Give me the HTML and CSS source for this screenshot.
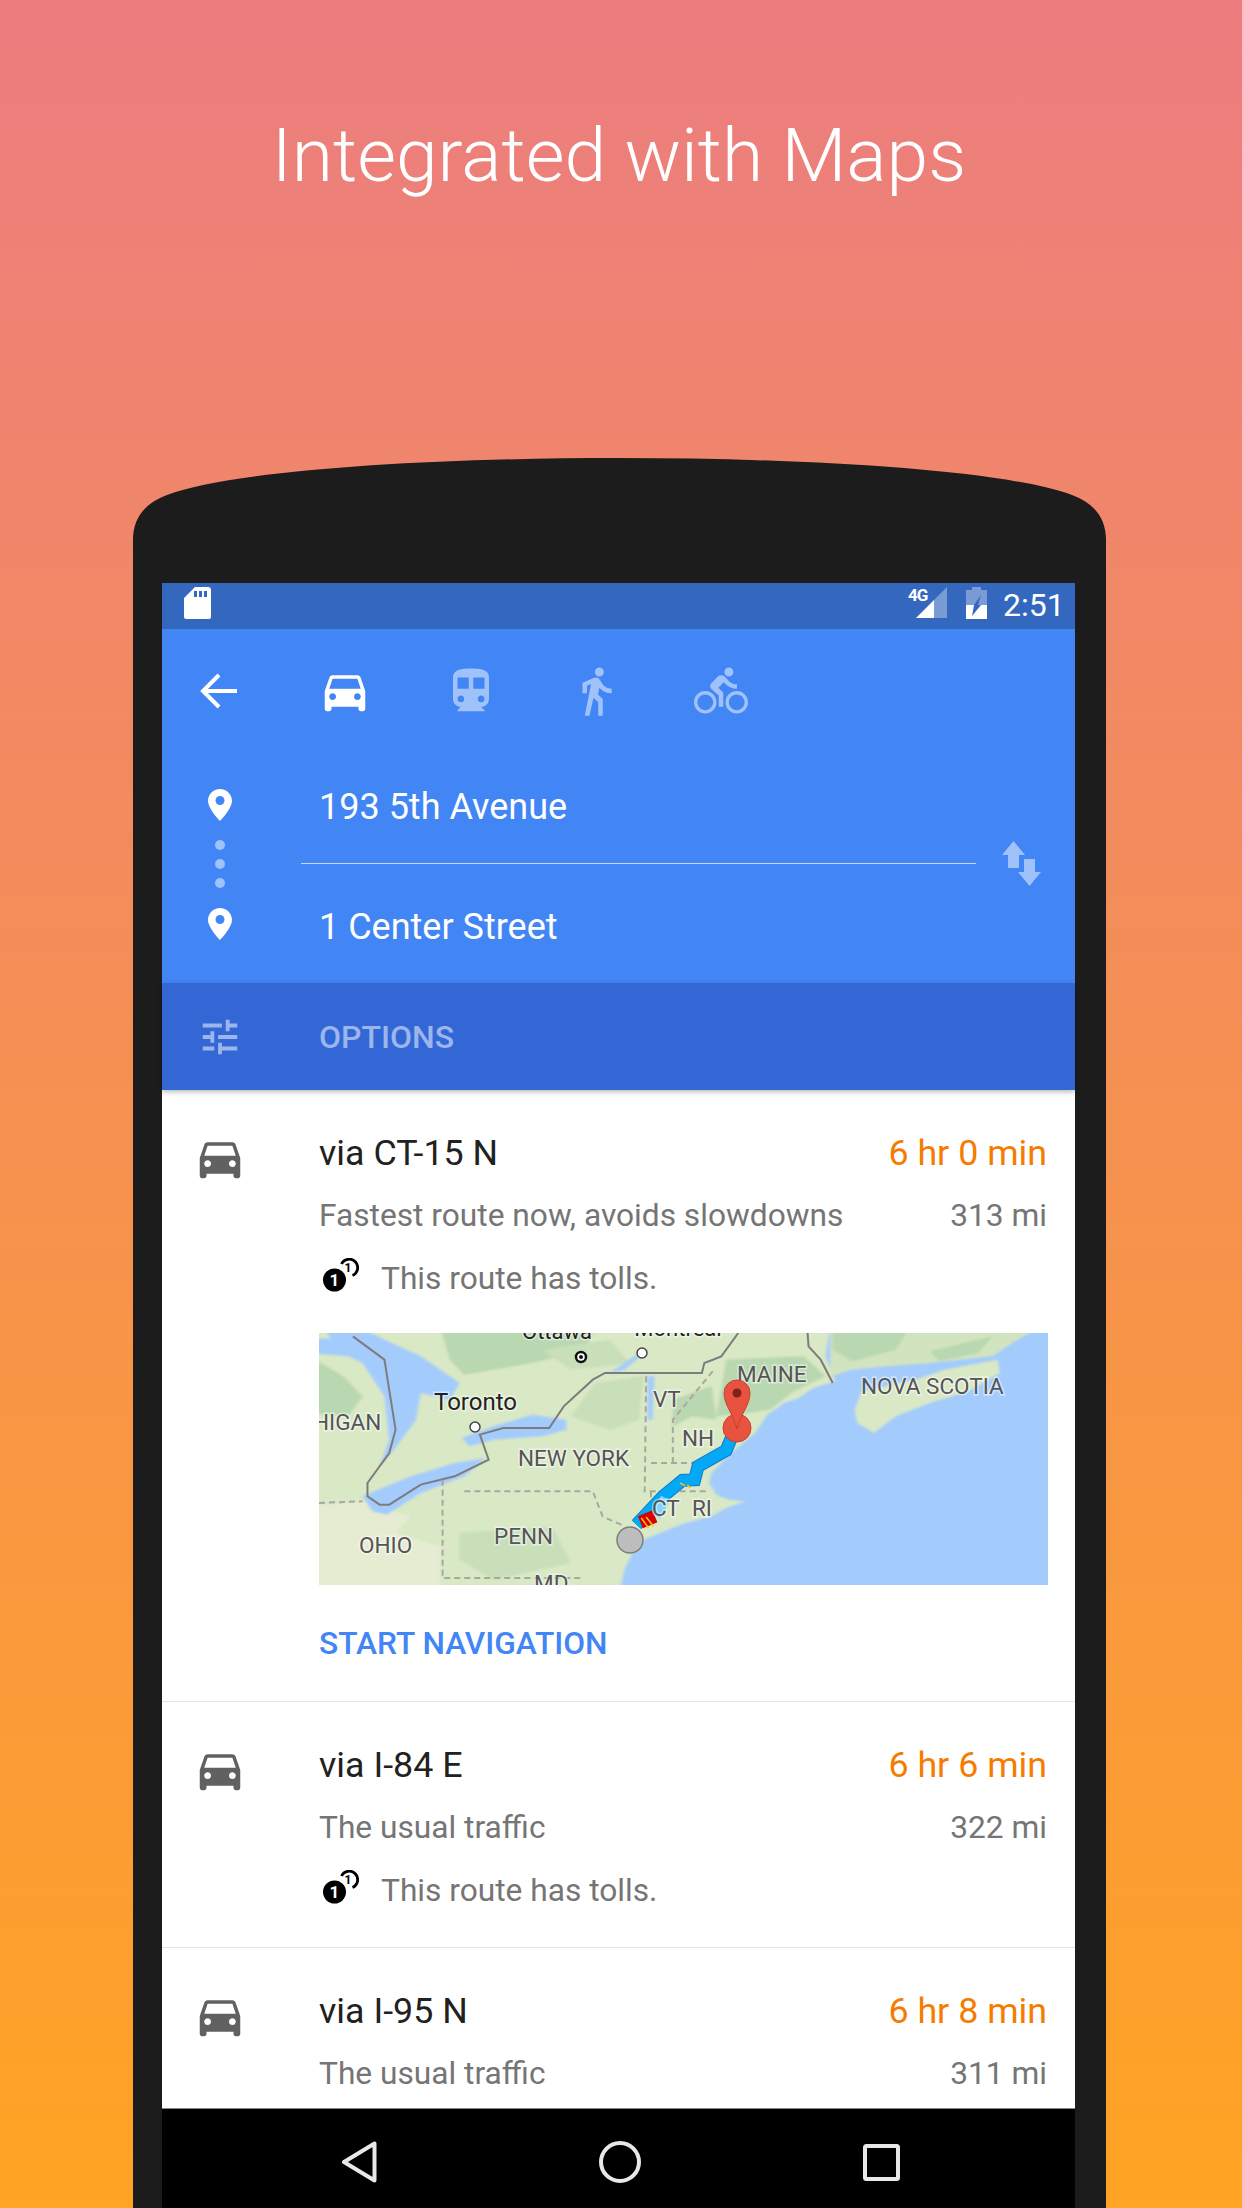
FILE: index.html
```html
<!DOCTYPE html>
<html>
<head lang="en">
    <meta charset="UTF-8">
    <title>Integrated with Maps</title>
    <link rel="stylesheet" href="styles.css">
</head>
<body>
<svg class="defs" width="0" height="0">
    <symbol id="car" viewBox="0 0 24 24"><path d="M18.92 6.01C18.72 5.42 18.16 5 17.5 5h-11c-.66 0-1.21.42-1.42 1.01L3 12v8c0 .55.45 1 1 1h1c.55 0 1-.45 1-1v-1h12v1c0 .55.45 1 1 1h1c.55 0 1-.45 1-1v-8l-2.08-5.99zM6.5 16c-.83 0-1.5-.67-1.5-1.5S5.67 13 6.5 13s1.5.67 1.5 1.5S7.33 16 6.5 16zm11 0c-.83 0-1.5-.67-1.5-1.5s.67-1.5 1.5-1.5 1.5.67 1.5 1.5-.67 1.5-1.5 1.5zM5 11l1.5-4.5h11L19 11H5z"/></symbol>
    <symbol id="pin" viewBox="0 0 24 32"><path fill-rule="evenodd" d="M12 0C5.4 0 0 5.2 0 11.8 0 20 12 32 12 32s12-12 12-20.200C24 5.200 18.600 0 12 0zm0 16a4.500 4.500 0 1 1 0-9 4.500 4.500 0 0 1 0 9z"/></symbol>
    <symbol id="toll" viewBox="0 0 36 34">
        <circle cx="11.500" cy="22" r="11.500" fill="#000"/>
        <path d="M18.500 6a8.500 8.500 0 1 1 11 11.500" fill="none" stroke="#000" stroke-width="2.800"/>
        <text x="11.500" y="28" class="toll-big">1</text>
        <text x="25" y="14" class="toll-small">1</text>
    </symbol>
</svg>

<div class="page">
    <h1 class="headline">Integrated with Maps</h1>

    <div class="phone">
        <div class="screen">
            <div class="statusbar">
                <svg class="sd" viewBox="0 0 27 32"><path fill-rule="evenodd" d="M11 0h13a3 3 0 0 1 3 3v27a2 2 0 0 1-2 2H2a2 2 0 0 1-2-2V11zM10 4v6h3V4zm5 0v6h3V4zm5 0v6h3V4z"/></svg>
                <div class="status-right">
                    <div class="signal">
                        <svg class="signal-icon" viewBox="0 0 31 31"><path d="M31 0v31h-13V13z" opacity=".35"/><path d="M18 13v18H0z"/></svg>
                        <span class="net">4G</span>
                    </div>
                    <svg class="battery" viewBox="0 0 21 32"><path d="M6 0h9v3h6v15H12l3-10-7 10H0V3h6z" opacity=".35"/><path d="M0 18h8l-2 11 9-11h6v14H0z"/></svg>
                    <span class="clock">2:51</span>
                </div>
            </div>

            <div class="header">
                <div class="modes">
                    <svg class="mode" viewBox="0 0 54 54"><path d="M44 33H12M26 17L10 33l16 16" transform="translate(0 -6)" fill="none" stroke="#fff" stroke-width="4"/></svg>
                    <svg class="mode"><use href="#car"/></svg>
                    <svg class="mode dim" viewBox="0 0 24 24"><path d="M12 2c-4.420 0-8 .5-8 4v9.500C4 17.430 5.570 19 7.500 19L6 20.500v.5h12v-.5L16.500 19c1.930 0 3.500-1.570 3.500-3.500V6c0-3.500-3.580-4-8-4zM7.500 17c-.83 0-1.500-.67-1.500-1.500S6.670 14 7.500 14s1.500.67 1.500 1.500S8.330 17 7.500 17zm3.500-6H6V6h5v5zm5.500 6c-.83 0-1.500-.67-1.500-1.500s.67-1.500 1.500-1.500 1.500.67 1.500 1.500-.67 1.500-1.500 1.500zm1.500-6h-5V6h5v5z"/></svg>
                    <svg class="mode dim" viewBox="0 0 24 24"><path d="M13.500 5.500c1.100 0 2-.9 2-2s-.9-2-2-2-2 .9-2 2 .9 2 2 2zM9.800 8.900L7 23h2.100l1.800-8 2.100 2v6h2v-7.500l-2.100-2 .6-3C14.800 12 16.800 13 19 13v-2c-1.900 0-3.500-1-4.300-2.400l-1-1.600c-.4-.6-1-1-1.700-1-.3 0-.5.1-.8.1L6 8.300V13h2V9.600l1.800-.7"/></svg>
                    <svg class="mode dim" viewBox="0 0 24 24"><path d="M15.500 5.500c1.100 0 2-.9 2-2s-.9-2-2-2-2 .9-2 2 .9 2 2 2zM5 12c-2.800 0-5 2.200-5 5s2.200 5 5 5 5-2.200 5-5-2.200-5-5-5zm0 8.500c-1.900 0-3.500-1.600-3.500-3.500s1.600-3.500 3.500-3.500 3.500 1.600 3.500 3.500-1.600 3.500-3.500 3.500zm5.800-10l2.400-2.400.8.800c1.300 1.300 3 2.100 5.100 2.100V9c-1.500 0-2.700-.6-3.600-1.500l-1.900-1.900c-.5-.4-1-.6-1.600-.6s-1.100.2-1.400.6L7.800 8.400c-.4.4-.6.9-.6 1.400 0 .6.2 1.100.6 1.400L11 14v5h2v-6.200l-2.200-2.300zM19 12c-2.800 0-5 2.200-5 5s2.200 5 5 5 5-2.200 5-5-2.200-5-5-5zm0 8.500c-1.900 0-3.500-1.600-3.500-3.500s1.600-3.500 3.500-3.500 3.500 1.600 3.500 3.500-1.600 3.500-3.500 3.500z"/></svg>
                </div>

                <div class="places">
                    <div class="stops">
                        <svg class="pin"><use href="#pin"/></svg>
                        <div class="dots"><i></i><i></i><i></i></div>
                        <svg class="pin"><use href="#pin"/></svg>
                    </div>
                    <div class="fields">
                        <div class="field first">193 5th Avenue</div>
                        <div class="field">1 Center Street</div>
                    </div>
                    <svg class="swap" viewBox="0 0 39 45"><path d="M11.500 0L23 14h-6v13H6V14H0zM22 18h11v13h6L27.500 45 16 31h6z"/></svg>
                </div>
            </div>

            <div class="options">
                <svg class="tune" viewBox="0 0 24 24"><path d="M3 17v2h6v-2H3zM3 5v2h10V5H3zm10 16v-2h8v-2h-8v-2h-2v6h2zM7 9v2H3v2h4v2h2V9H7zm14 4v-2H11v2h10zm-6-4h2V7h4V5h-4V3h-2v6z"/></svg>
                <span class="options-label">OPTIONS</span>
            </div>

            <div class="routes">
                <div class="route">
                    <svg class="route-car"><use href="#car"/></svg>
                    <div class="route-main">
                        <div class="line">
                            <span class="route-name">via CT-15 N</span>
                            <span class="route-time">6 hr 0 min</span>
                        </div>
                        <div class="line sub">
                            <span>Fastest route now, avoids slowdowns</span>
                            <span>313 mi</span>
                        </div>
                        <div class="tolls">
                            <svg class="toll-icon"><use href="#toll"/></svg>
                            <span>This route has tolls.</span>
                        </div>

                        <svg class="map" viewBox="0 0 729 252">
                            <rect width="729" height="252" fill="#a3ccfd"/>
                            <g transform="translate(-19.400 -13.330) scale(.4847 .3333)">
                                <g class="map-base">
                                    <!-- land -->
                                    <path fill="#d9e8c5" d="M20 20H1095L1085 110 1105 185 1060 205 1030 235 1000 250 965 285 940 340 895 395 850 460 845 490 860 525 885 540 920 545 880 565 850 590 790 612 710 660 685 705 670 750 660 815H20z"/>
                                    <path fill="#e5ecd2" d="M20 560L130 545 230 590 200 640 290 680 290 815H20z"/>
                                    <path fill="#d2e4bf" d="M1095 20H1530L1470 70 1430 110 1300 130 1210 140 1140 150 1095 170z"/>
                                    <path fill="#d9e8c5" d="M1145 270L1160 215 1270 180 1330 150 1440 120 1445 160 1380 215 1300 250 1230 290 1185 340 1150 310z"/>
                                    <!-- forest -->
                                    <path fill="#b9d7b0" d="M290 20H610L590 90 480 130 340 165 310 120zM880 120L1040 110 1085 170 1020 215 970 270 925 280 860 290zM1100 20H1260L1230 90 1140 125 1100 90zM1300 95L1430 50 1400 100 1320 125zM20 110L90 170 130 230 100 290 20 280zM770 240L850 200 860 300 810 290 770 320z"/>
                                    <path fill="#c8dfba" d="M610 190L710 170 700 300 640 330 560 290zM500 90L640 60 680 130 560 150zM330 640L520 620 560 730 400 780 330 720z"/>
                                    <!-- lakes -->
                                    <path fill="#a3ccfd" d="M50 20H120L175 60 250 110 330 190 310 240 250 220 240 300 195 390 165 440 185 360 175 230 130 130 70 75zM20 55L110 60 130 130 100 110 20 100z"/>
                                    <path fill="#a3ccfd" d="M335 355L400 320 480 285 550 300 550 330 500 350 400 360 350 380z"/>
                                    <path fill="#a3ccfd" d="M130 530L230 470 320 430 385 415 340 470 250 520 180 585 150 575z"/>
                                    <path fill="#a3ccfd" d="M718 170L732 170 728 300 718 300zM640 160L700 100 720 90 670 150z"/>
                                </g>
                                <!-- country and state lines -->
                                <g fill="none" stroke-width="2">
                                    <path stroke="#7c7c7c" vector-effect="non-scaling-stroke" d="M110 50L175 120 198 330 185 400 140 490 140 530 165 555 185 555 250 495 320 470 390 420 372 345 420 325 515 325 545 260 605 180 630 160H830L835 130 870 110 905 40M1048 40L1050 80 1075 120 1100 190"/>
                                    <path stroke="#a8a8a0" stroke-dasharray="6 4" vector-effect="non-scaling-stroke" d="M40 550L130 545M295 480V775H580M340 515H605L625 590 670 620M715 170L712 515H840M725 430H820M770 430V300L855 150M725 515V600"/>
                                </g>
                                <!-- route -->
                                <path fill="none" stroke="#1976d2" stroke-width="13" vector-effect="non-scaling-stroke" d="M695 615L750 530 790 482 815 480 822 440 880 392 895 340"/>
                                <path fill="none" stroke="#03a9f4" stroke-width="11" vector-effect="non-scaling-stroke" d="M695 615L750 530 790 482 815 480 822 440 880 392 895 340"/>
                                <path fill="none" stroke="#81d4fa" stroke-width="10" vector-effect="non-scaling-stroke" d="M735 590L755 535"/>
                                <path fill="none" stroke="#d50000" stroke-width="13" vector-effect="non-scaling-stroke" d="M703 608L733 590"/>
                                <path fill="none" stroke="#ffc107" stroke-width="1.500" vector-effect="non-scaling-stroke" d="M705 595L720 625M715 592L730 620M785 490L795 498M800 495L806 505"/>
                            </g>

                            <g class="map-labels">
                                <text x="238" y="6" text-anchor="middle" class="dark">Ottawa</text>
                                <text x="359" y="3" text-anchor="middle" class="dark">Montreal</text>
                                <text x="115" y="77" class="dark big">Toronto</text>
                                <text x="-6" y="97">HIGAN</text>
                                <text x="418" y="49">MAINE</text>
                                <text x="542" y="61">NOVA SCOTIA</text>
                                <text x="334" y="74">VT</text>
                                <text x="363" y="113">NH</text>
                                <text x="199" y="133">NEW YORK</text>
                                <text x="333" y="183">CT</text>
                                <text x="373" y="183">RI</text>
                                <text x="175" y="211">PENN</text>
                                <text x="40" y="220">OHIO</text>
                                <text x="215" y="258">MD</text>
                            </g>

                            <circle cx="262" cy="24" r="5" fill="#fff" stroke="#111" stroke-width="2.500"/>
                            <circle cx="262" cy="24" r="2" fill="#111"/>
                            <circle cx="323" cy="20" r="5" fill="#fff" stroke="#444" stroke-width="1.500"/>
                            <circle cx="156" cy="94" r="5" fill="#fff" stroke="#444" stroke-width="1.500"/>

                            <circle cx="311" cy="207" r="13" fill="#bdbdbd" stroke="#7d7d7d" stroke-width="1.500"/>
                            <circle cx="418" cy="95" r="14" fill="#e8533f" stroke="#c9402f" stroke-width="1"/>
                            <path d="M418 96C414 80 405 72 405 60a13 13 0 0 1 26 0C431 72 422 80 418 96z" fill="#e8533f" stroke="#c9402f" stroke-width="1"/>
                            <circle cx="418" cy="60" r="4.500" fill="#80221a"/>
                        </svg>

                        <div class="start">START NAVIGATION</div>
                    </div>
                </div>

                <div class="route">
                    <svg class="route-car"><use href="#car"/></svg>
                    <div class="route-main">
                        <div class="line">
                            <span class="route-name">via I-84 E</span>
                            <span class="route-time">6 hr 6 min</span>
                        </div>
                        <div class="line sub">
                            <span>The usual traffic</span>
                            <span>322 mi</span>
                        </div>
                        <div class="tolls">
                            <svg class="toll-icon"><use href="#toll"/></svg>
                            <span>This route has tolls.</span>
                        </div>
                    </div>
                </div>

                <div class="route">
                    <svg class="route-car"><use href="#car"/></svg>
                    <div class="route-main">
                        <div class="line">
                            <span class="route-name">via I-95 N</span>
                            <span class="route-time">6 hr 8 min</span>
                        </div>
                        <div class="line sub">
                            <span>The usual traffic</span>
                            <span>311 mi</span>
                        </div>
                    </div>
                </div>
            </div>

            <div class="navbar">
                <svg class="nav-icon back" viewBox="0 0 36 42"><path d="M33.500 2.500v37L3 21z" fill="none" stroke="#e8e8e8" stroke-width="4" stroke-linejoin="round"/></svg>
                <svg class="nav-icon home" viewBox="0 0 42 42"><circle cx="21" cy="21" r="19" fill="none" stroke="#e8e8e8" stroke-width="4"/></svg>
                <svg class="nav-icon recent" viewBox="0 0 37 37"><rect x="2" y="2" width="33" height="33" rx="1.500" fill="none" stroke="#e8e8e8" stroke-width="4"/></svg>
            </div>
        </div>
    </div>
</div>
</body>
</html>
```

FILE: styles.css
```css
* {
    margin: 0;
    padding: 0;
    box-sizing: border-box;
}
html, body {
    width: 1242px;
    height: 2208px;
    overflow: hidden;
}
body {
    font-family: Roboto, "Liberation Sans", sans-serif;
}
.defs {
    position: absolute;
}
.page {
    height: 2208px;
    overflow: hidden;
    background: linear-gradient(180deg, #eb7d80 0%, #ffa423 100%);
}
.headline {
    height: 458px;
    padding-top: 105px;
    font-size: 75px;
    line-height: 100px;
    font-weight: 300;
    color: #fff;
    text-align: center;
    padding-right: 4px;
}

/* phone */
.phone {
    width: 973px;
    height: 1750px;
    margin-left: 133px;
    padding: 125px 31px 0 29px;
    background: #1c1c1c;
    clip-path: path("M0 82C0 60 12 45 34 37C100 12 300 0 486 0C672 0 873 12 939 37C961 45 973 60 973 82V1750H0Z");
}
.screen {
    height: 1625px;
    display: flex;
    flex-direction: column;
    background: #fff;
}

/* status bar */
.statusbar {
    height: 46px;
    flex: none;
    display: flex;
    justify-content: space-between;
    background: #3468bf;
    padding: 4px 12px 0 22px;
}
.sd {
    width: 27px;
    height: 32px;
    fill: #fff;
}
.status-right {
    display: flex;
    fill: #fff;
}
.signal {
    position: relative;
    width: 39px;
}
.net {
    position: absolute;
    left: 0;
    top: 0;
    font-size: 17px;
    line-height: 17px;
    letter-spacing: -1px;
    font-weight: 700;
    color: #fff;
}
.signal-icon {
    position: absolute;
    right: 0;
    top: 0;
    width: 31px;
    height: 31px;
}
.battery {
    width: 21px;
    height: 32px;
    margin-left: 19px;
}
.clock {
    margin-left: 16px;
    width: 60px;
    font-size: 32px;
    line-height: 36px;
    color: #fff;
}

/* blue header */
.header {
    height: 354px;
    flex: none;
    background: #4285f4;
}
.modes {
    display: flex;
    gap: 71.250px;
    padding: 35px 0 0 31px;
}
.mode {
    width: 54px;
    height: 54px;
    flex: none;
    fill: #fff;
}
.mode.dim {
    fill: #a0c2fa;
}
.places {
    display: flex;
    margin-top: 71px;
}
.stops {
    width: 139px;
    padding-left: 46px;
    display: flex;
    flex-direction: column;
    fill: #fff;
}
.pin {
    width: 24px;
    height: 32px;
    display: block;
}
.dots {
    height: 87px;
    display: flex;
    flex-direction: column;
    gap: 9px;
    padding: 19px 0 0 7px;
}
.dots i {
    width: 10px;
    height: 10px;
    border-radius: 50%;
    background: #a0c2fa;
}
.fields {
    width: 675px;
    flex: none;
}
.field {
    height: 74px;
    padding: 0 0 0 18px;
    font-size: 36px;
    line-height: 34px;
    color: #fff;
}
.field.first {
    height: 75px;
    line-height: 37px;
    border-bottom: 1px solid #c4d9fb;
    margin-bottom: 46px;
}
.swap {
    width: 39px;
    height: 45px;
    margin: 52px 0 0 26px;
    fill: #a0c2fa;
}

/* options */
.options {
    height: 107px;
    flex: none;
    display: flex;
    align-items: center;
    position: relative;
    background: #3367d6;
    box-shadow: 0 2px 5px rgba(0, 0, 0, .28);
}
.tune {
    width: 46px;
    height: 46px;
    margin-left: 35px;
    fill: #9cb5ec;
}
.options-label {
    margin-left: 76px;
    font-size: 32px;
    font-weight: 500;
    color: #9cb5ec;
}

/* routes */
.routes {
    flex: 1;
    min-height: 0;
    overflow: hidden;
}
.route {
    display: flex;
    padding: 38px 28px 32px 0;
    border-bottom: 1px solid #e4e4e4;
}
.route-car {
    width: 54px;
    height: 54px;
    flex: none;
    margin: 3px 72px 0 31px;
    fill: #616161;
}
.route-main {
    flex: 1;
    min-width: 0;
}
.line {
    display: flex;
    justify-content: space-between;
    font-size: 35.800px;
    line-height: 50px;
}
.route-name {
    color: #212121;
}
.route-time {
    color: #f57c00;
}
.sub {
    margin-top: 13px;
    padding-bottom: 1px;
    font-size: 31.700px;
    color: #757575;
}
.tolls {
    display: flex;
    align-items: center;
    margin-top: 11px;
    height: 50px;
    font-size: 31.700px;
    color: #757575;
}
.toll-icon {
    width: 36px;
    height: 34px;
    margin: -6px 22px 0 4px;
    flex: none;
}
.toll-big {
    font-size: 17px;
    font-weight: 700;
    fill: #fff;
    text-anchor: middle;
}
.toll-small {
    font-size: 12px;
    font-weight: 700;
    fill: #000;
    text-anchor: middle;
}
.map {
    display: block;
    width: 729px;
    height: 252px;
    margin-top: 30px;
}
.map-base {
    filter: blur(3px);
}
.map-labels {
    font-size: 22.500px;
    fill: #555;
    stroke: rgba(255, 255, 255, .5);
    stroke-width: 3px;
    paint-order: stroke;
}
.map-labels .dark {
    fill: #222;
    font-size: 22px;
}
.map-labels .big {
    font-size: 24px;
}
.start {
    margin-top: 34px;
    font-size: 31.700px;
    line-height: 50px;
    font-weight: 500;
    color: #4285f4;
}

/* nav bar */
.navbar {
    height: 100px;
    flex: none;
    position: relative;
    display: flex;
    align-items: center;
    padding-top: 7px;
    background: #000;
    border-top: 1px solid #888;
}
.nav-icon {
    flex: none;
}
.back {
    width: 36px;
    height: 42px;
    margin-left: 179px;
}
.home {
    width: 42px;
    height: 42px;
    margin-left: 222px;
}
.recent {
    width: 37px;
    height: 37px;
    margin-left: 222px;
}
```
